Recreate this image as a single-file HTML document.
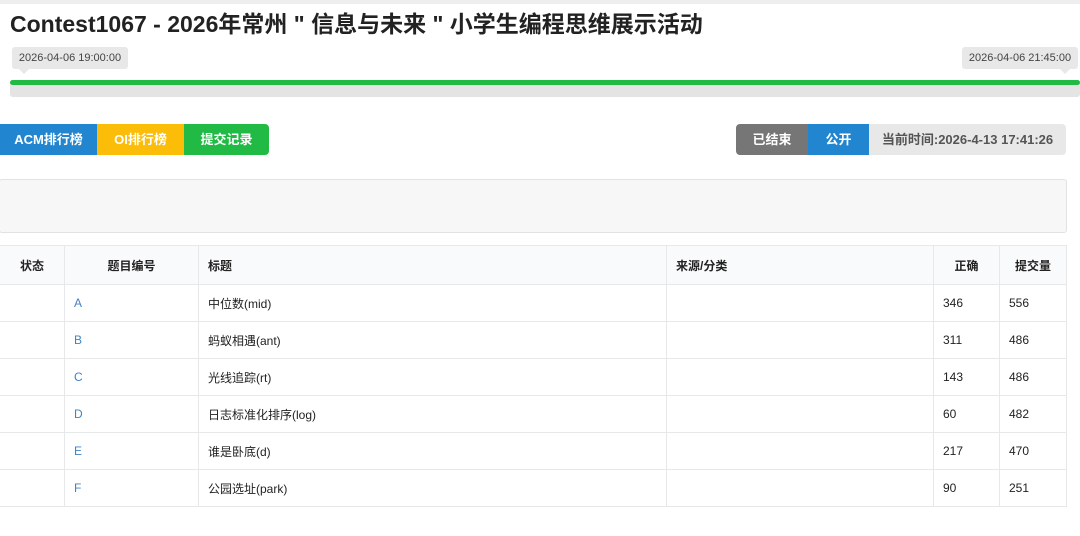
<!DOCTYPE html>
<html><head><meta charset="utf-8"><style>
body{margin:0;width:1080px;height:536px;background:#fff;font-family:"Liberation Sans","Noto Sans CJK SC",sans-serif;position:relative;overflow:hidden;color:#222}
.a{position:absolute}
.tt{background:#e8e8e8;border-radius:3px;font-size:11px;color:#444;height:22px;line-height:22px;text-align:center}
.btn{position:absolute;top:124px;height:31px;line-height:31px;font-size:13px;font-weight:bold;color:#fff;text-align:center}
table{position:absolute;left:-1px;top:245px;border-collapse:collapse;font-size:12px;width:1067px;table-layout:fixed}
td,th{border:1px solid #e6e8ea;height:36px;padding:0 9px;text-align:left}
th{background:#f9fafb;font-weight:bold;height:38px}
td.l{color:#4183c4}
</style></head><body>
<div class="a" style="left:0;top:0;width:1080px;height:4px;background:#eee"></div>
<div class="a" style="left:10px;top:5px;font-size:23px;font-weight:bold;color:#222;white-space:nowrap">Contest1067 - 2026年常州 " 信息与未来 " 小学生编程思维展示活动</div>
<div class="a tt" style="left:12px;top:47px;width:116px">2026-04-06 19:00:00</div>
<div class="a" style="left:19px;top:69px;width:0;height:0;border-left:5px solid transparent;border-right:5px solid transparent;border-top:5px solid #e8e8e8"></div>
<div class="a tt" style="left:962px;top:47px;width:116px">2026-04-06 21:45:00</div>
<div class="a" style="left:1060px;top:69px;width:0;height:0;border-left:5px solid transparent;border-right:5px solid transparent;border-top:5px solid #e8e8e8"></div>
<div class="a" style="left:10px;top:80px;width:1070px;height:17px;background:#e4e4e4;border-radius:3px"></div>
<div class="a" style="left:10px;top:80px;width:1070px;height:5px;background:#21ba45;border-radius:3px"></div>
<div class="btn" style="left:0;width:97px;background:#2185d0">ACM排行榜</div>
<div class="btn" style="left:97px;width:87px;background:#fbbd08">OI排行榜</div>
<div class="btn" style="left:184px;width:85px;background:#21ba45;border-radius:0 4px 4px 0">提交记录</div>
<div class="btn" style="left:736px;width:72px;background:#767676;border-radius:4px 0 0 4px">已结束</div>
<div class="btn" style="left:808px;width:61px;background:#2185d0">公开</div>
<div class="btn" style="left:869px;width:197px;background:#e8e8e8;color:#555;border-radius:0 4px 4px 0">当前时间:2026-4-13 17:41:26</div>
<div class="a" style="left:-1px;top:179px;width:1066px;height:52px;background:#f7f7f7;border:1px solid #e2e2e2;border-radius:3px"></div>
<table>
<colgroup><col style="width:65px"><col style="width:134px"><col style="width:468px"><col style="width:267px"><col style="width:66px"><col style="width:67px"></colgroup>
<tr><th style="text-align:center">状态</th><th style="text-align:center">题目编号</th><th>标题</th><th>来源/分类</th><th style="text-align:center">正确</th><th style="text-align:center">提交量</th></tr>
<tr><td></td><td class="l">A</td><td>中位数(mid)</td><td></td><td>346</td><td>556</td></tr>
<tr><td></td><td class="l">B</td><td>蚂蚁相遇(ant)</td><td></td><td>311</td><td>486</td></tr>
<tr><td></td><td class="l">C</td><td>光线追踪(rt)</td><td></td><td>143</td><td>486</td></tr>
<tr><td></td><td class="l">D</td><td>日志标准化排序(log)</td><td></td><td>60</td><td>482</td></tr>
<tr><td></td><td class="l">E</td><td>谁是卧底(d)</td><td></td><td>217</td><td>470</td></tr>
<tr><td></td><td class="l">F</td><td>公园选址(park)</td><td></td><td>90</td><td>251</td></tr>
</table>
</body></html>
